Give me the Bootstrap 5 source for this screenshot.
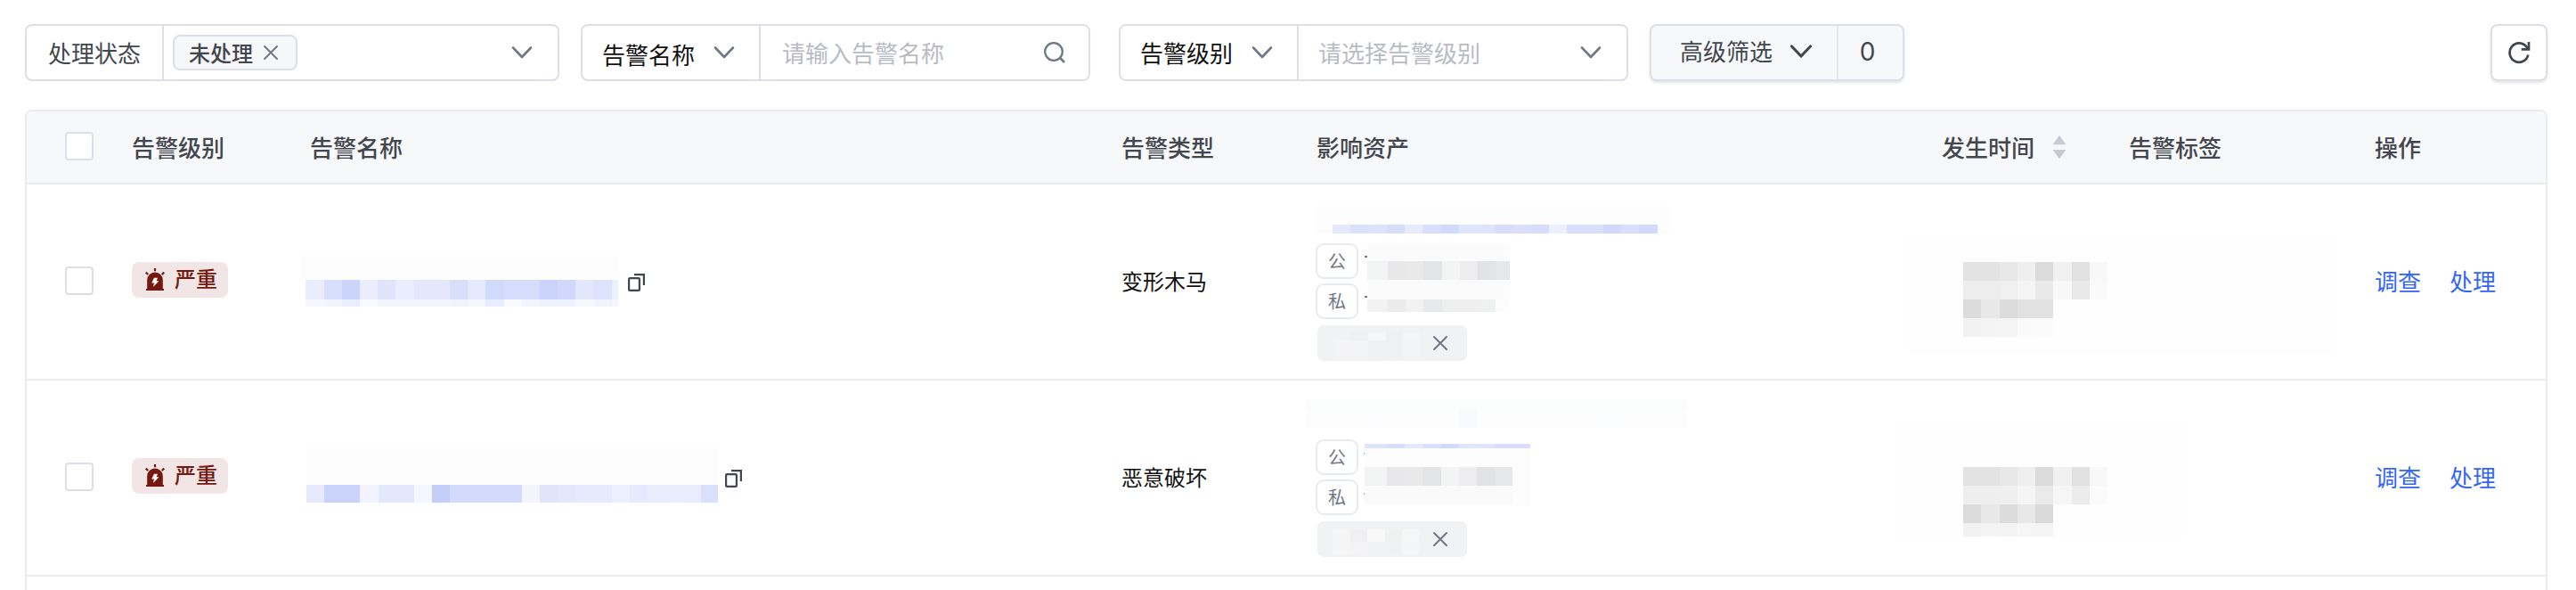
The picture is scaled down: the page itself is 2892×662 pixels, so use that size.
<!DOCTYPE html>
<html lang="zh-CN">
<head>
    <meta charset="UTF-8">
    <meta name="viewport" content="width=device-width, initial-scale=1.0">
    <title>告警列表</title>

    <!-- Bootstrap CSS -->
    <link href="https://cdn.jsdelivr.net/npm/bootstrap@5.3.0/dist/css/bootstrap.min.css" rel="stylesheet">

    <style>
        body {
            font-family: "Noto Sans CJK SC", sans-serif;
            font-size: 26px;
            line-height: 40px;
            color: #42464e;
            background: #fff;
            padding: 27px 32px 0 28px;
            overflow: hidden;
        }
        svg {
            display: block;
            flex: none;
            fill: none;
            stroke: currentColor;
        }

        /* Filter bar */
        .filter-bar {
            height: 64px;
            margin-bottom: 32px;
        }
        .filter-box {
            height: 64px;
            border: 2px solid #dcdfe7;
            border-radius: 8px;
        }
        .filter-label {
            padding-left: 24px;
            border-right: 2px solid #dcdfe7;
        }
        .filter-value {
            padding-left: 24px;
            padding-right: 28px;
        }
        .w-status { width: 600px; margin-right: 24px; }
        .w-name { width: 572px; margin-right: 32px; }
        .w-level { width: 572px; margin-right: 24px; }
        .w-more { width: 286px; }
        .w-status .filter-label { width: 154px; }
        .w-status .filter-value { padding-left: 10px; }
        .w-name .filter-label { width: 200px; padding-left: 22px; }
        .w-name .filter-label span { padding-top: 3px; }
        .w-name .filter-value { padding-right: 25px; }
        .w-level .filter-label { width: 200px; padding-left: 22px; }
        .w-level .filter-value { padding-left: 22px; }
        .filter-label svg { margin-right: 27px; }
        .filter-label, .filter-value { color: #42464e; }
        .field-name { color: #111; }
        .hint { color: #b8bbc3; }
        .icon-gray { color: #717785; }
        .picked-tag {
            width: 140px;
            height: 40px;
            padding-left: 16px;
            border: 2px solid #dcdfe7;
            border-radius: 8px;
            background: #f6f7f9;
            font-size: 24px;
            font-weight: 500;
        }
        .picked-tag svg { margin-left: 11px; }
        .btn-shade {
            box-shadow: 0 2px 3px rgba(30, 35, 60, .12);
        }
        .w-more { background: #f7f8fa; }
        .more-label {
            width: 210px;
            padding-left: 32px;
            border-right: 2px solid #e7e9ef;
        }
        .more-label span { padding-bottom: 4px; }
        .more-label svg { margin: 0 0 3px 19px; }
        .more-count {
            font: 400 28px/40px Inter, sans-serif;
            padding: 0 7px 2px 0;
        }
        .w-reload { width: 64px; }

        /* Alert table */
        .table-frame {
            border: 2px solid #e9ebef;
            border-radius: 8px 8px 0 0;
            height: 560px;
            overflow: hidden;
        }
        .alert-table {
            --bs-table-bg: transparent;
            --bs-table-color: #42464e;
            table-layout: fixed;
            border-collapse: separate;
            border-spacing: 0;
        }
        .alert-table > * > tr > * {
            padding: 0;
            border-bottom: 2px solid #e9edf1;
            color: #42464e;
        }
        .alert-table > thead > tr > th {
            height: 82px;
            background: #f7f8fa;
            font-weight: 500;
            vertical-align: middle;
        }
        .alert-table > tbody > tr > td {
            height: 220px;
            vertical-align: middle;
        }
        .alert-table > tbody > tr > td.cell-top { vertical-align: top; }
        .alert-table > tbody > tr > td.kind {
            font-size: 24px;
            color: #111;
            padding-bottom: 3px;
        }
        .check {
            width: 32px;
            height: 32px;
            margin: 0 0 2px 43px;
            border: 2px solid #dcdfe7;
            border-radius: 4px;
            background: #fff;
        }
        .level-tag {
            width: 108px;
            height: 40px;
            margin-bottom: 4px;
            padding-left: 14px;
            border-radius: 8px;
            background: #f1e6e5;
            color: #75190f;
            font-size: 24px;
            font-weight: 500;
        }
        .level-tag span { margin-left: 10px; padding-bottom: 4px; }
        .copy-icon { margin-top: 99px; }
        .ip-tag {
            width: 48px;
            height: 40px;
            margin: 0 1px 5px -1px;
            border: 2px solid #e7eaef;
            border-radius: 9px;
            font-size: 20px;
            color: #717785;
        }
        .asset-tag {
            width: 168px;
            height: 40px;
            margin: 2px 0 0 1px;
            border-radius: 7px;
            background: #f1f2f4;
            padding-right: 21px;
            color: #717785;
        }
        .asset-tag .mosaic { margin-left: 17px; }
        .ops { gap: 32px; padding-bottom: 3px; }
        .ops a { color: #3366f6; }
        .mosaic { stroke: none; }
        .m-name-1 { margin: 79px 10px 0 -10px; }
        .m-name-2 { margin: 75px 7px 0 -4px; }
        .m-host-1 { margin: 23px 0 11px 0; }
        .m-host-2 { margin: 21px 0 13px -12px; }
        .m-ip-1 { margin: 1px 0 0 6px; }
        .m-ip-2 { margin: 5px 0 0 5px; }
        .m-time-1 { margin: 56px 0 0 -38px; }
        .m-time-2 { margin: 50px 0 0 -53px; }
    </style>
</head>
<body>

<!-- Shared icons -->
<svg width="0" height="0" class="position-absolute">
    <symbol id="i-down" viewBox="0 0 24 16"><path d="M2 2.5 12 13 22 2.5" stroke-width="2.6" stroke-linecap="round" stroke-linejoin="round"/></symbol>
    <symbol id="i-down-bold" viewBox="0 0 26 18"><path d="M2.5 3 13 14 23.5 3" stroke-width="3.2" stroke-linecap="round" stroke-linejoin="round"/></symbol>
    <symbol id="i-close" viewBox="0 0 18 18"><path d="M2 2 16 16M16 2 2 16" stroke-width="2" stroke-linecap="round"/></symbol>
    <symbol id="i-search" viewBox="0 0 26 26"><circle cx="12" cy="12" r="9.8" stroke-width="2.3"/><path d="M19 19 24 24" stroke-width="2.5"/></symbol>
    <symbol id="i-reload" viewBox="0 0 26 26"><path d="M23.3 15.5A10.5 10.8 0 1 1 21.3 6.4L23.6 9.2" stroke-width="2.7"/><path d="M24 1V9.3H15.8" stroke-width="2.7"/></symbol>
    <symbol id="i-copy" viewBox="0 0 20 22"><rect x="2.1" y="6.1" width="11.8" height="13.8" rx="1" stroke-width="2.2"/><path d="M8 2.1H18.9V14" stroke-width="2.2"/></symbol>
    <symbol id="i-alarm" viewBox="0 0 24 28">
        <path d="M12 1V4.2M1.8 5.6 4.2 8M22.2 5.6 19.8 8" stroke-width="2.2"/>
        <path d="M3.2 24V14.2A8.8 8.6 0 0 1 20.8 14.2V24H22V26H2V24Z" fill="currentColor" stroke="none"/>
        <path d="M11 11.8H15L13.6 15.3H16.4L10 22 11 17.6H8.2Z" fill="#fff" stroke="none"/>
    </symbol>
    <symbol id="i-sort" viewBox="0 0 16 28"><path d="M8 1 15.4 11.2H.6ZM8 27.2.6 17H15.4Z" fill="#c7cad3" stroke="none"/></symbol>
</svg>

<!-- Filter bar -->
<div class="filter-bar d-flex">
    <div class="filter-box w-status d-flex">
        <div class="filter-label d-flex align-items-center">处理状态</div>
        <div class="filter-value flex-grow-1 d-flex align-items-center justify-content-between">
            <div class="picked-tag d-flex align-items-center"><span>未处理</span><svg class="icon-gray" width="18" height="18"><use href="#i-close"/></svg></div>
            <svg class="icon-gray" width="24" height="16"><use href="#i-down"/></svg>
        </div>
    </div>
    <div class="filter-box w-name d-flex">
        <div class="filter-label d-flex align-items-center justify-content-between"><span class="field-name">告警名称</span><svg class="icon-gray" width="24" height="16"><use href="#i-down"/></svg></div>
        <div class="filter-value flex-grow-1 d-flex align-items-center justify-content-between">
            <span class="hint">请输入告警名称</span>
            <svg class="icon-gray" width="26" height="26"><use href="#i-search"/></svg>
        </div>
    </div>
    <div class="filter-box w-level d-flex">
        <div class="filter-label d-flex align-items-center justify-content-between"><span class="field-name">告警级别</span><svg class="icon-gray" width="24" height="16"><use href="#i-down"/></svg></div>
        <div class="filter-value flex-grow-1 d-flex align-items-center justify-content-between">
            <span class="hint">请选择告警级别</span>
            <svg class="icon-gray" width="24" height="16"><use href="#i-down"/></svg>
        </div>
    </div>
    <div class="filter-box btn-shade w-more d-flex">
        <div class="more-label d-flex align-items-center"><span>高级筛选</span><svg width="26" height="18"><use href="#i-down-bold"/></svg></div>
        <div class="more-count flex-grow-1 d-flex align-items-center justify-content-center">0</div>
    </div>
    <div class="filter-box btn-shade w-reload ms-auto d-flex align-items-center justify-content-center">
        <svg width="26" height="26"><use href="#i-reload"/></svg>
    </div>
</div>

<!-- Alert table -->
<div class="table-frame">
    <table class="table alert-table mb-0">
        <colgroup>
            <col width="118"><col width="200"><col width="911"><col width="219"><col width="702"><col width="210"><col width="276"><col>
        </colgroup>
        <thead>
            <tr>
                <th><div class="check"></div></th>
                <th>告警级别</th>
                <th>告警名称</th>
                <th>告警类型</th>
                <th>影响资产</th>
                <th><div class="d-flex align-items-center">发生时间<svg class="ms-3 ps-1" width="22" height="28"><use href="#i-sort" width="16" height="28"/></svg></div></th>
                <th>告警标签</th>
                <th>操作</th>
            </tr>
        </thead>
        <tbody>
            <tr>
                <td><div class="check"></div></td>
                <td><div class="level-tag d-flex align-items-center"><svg width="24" height="28"><use href="#i-alarm"/></svg><span>严重</span></div></td>
                <td class="cell-top"><div class="d-flex align-items-start">
                    <svg class="mosaic m-name-1" width="356" height="58" data-mosaic="name1"></svg>
                    <svg class="copy-icon" width="20" height="22"><use href="#i-copy"/></svg>
                </div></td>
                <td class="kind">变形木马</td>
                <td class="cell-top">
                    <svg class="mosaic m-host-1" width="397" height="32" data-mosaic="host1"></svg>
                    <div class="d-flex align-items-start">
                        <div>
                            <div class="ip-tag d-flex align-items-center justify-content-center">公</div>
                            <div class="ip-tag d-flex align-items-center justify-content-center">私</div>
                        </div>
                        <svg class="mosaic m-ip-1" width="163" height="76" data-mosaic="ip1"></svg>
                    </div>
                    <div class="asset-tag d-flex align-items-center justify-content-between">
                        <svg class="mosaic" width="98" height="34" data-mosaic="tag1"></svg>
                        <svg width="18" height="18"><use href="#i-close"/></svg>
                    </div>
                </td>
                <td class="cell-top"><svg class="mosaic m-time-1" width="479" height="135" data-mosaic="time1"></svg></td>
                <td></td>
                <td><div class="ops d-flex"><a class="text-decoration-none" href="#">调查</a><a class="text-decoration-none" href="#">处理</a></div></td>
            </tr>
            <tr>
                <td><div class="check"></div></td>
                <td><div class="level-tag d-flex align-items-center"><svg width="24" height="28"><use href="#i-alarm"/></svg><span>严重</span></div></td>
                <td class="cell-top"><div class="d-flex align-items-start">
                    <svg class="mosaic m-name-2" width="462" height="62" data-mosaic="name2"></svg>
                    <svg class="copy-icon" width="20" height="22"><use href="#i-copy"/></svg>
                </div></td>
                <td class="kind">恶意破坏</td>
                <td class="cell-top">
                    <svg class="mosaic m-host-2" width="428" height="32" data-mosaic="host2"></svg>
                    <div class="d-flex align-items-start">
                        <div>
                            <div class="ip-tag d-flex align-items-center justify-content-center">公</div>
                            <div class="ip-tag d-flex align-items-center justify-content-center">私</div>
                        </div>
                        <svg class="mosaic m-ip-2" width="187" height="70" data-mosaic="ip2"></svg>
                    </div>
                    <div class="asset-tag d-flex align-items-center justify-content-between">
                        <svg class="mosaic" width="98" height="34" data-mosaic="tag2"></svg>
                        <svg width="18" height="18"><use href="#i-close"/></svg>
                    </div>
                </td>
                <td class="cell-top"><svg class="mosaic m-time-2" width="328" height="125" data-mosaic="time2"></svg></td>
                <td></td>
                <td><div class="ops d-flex"><a class="text-decoration-none" href="#">调查</a><a class="text-decoration-none" href="#">处理</a></div></td>
            </tr>
        </tbody>
    </table>
</div>

<script>
    // Masked values: each strip is [x, y, cell width, cell height, colours]
    const mosaics = {
        name1: [
            [0, 0, 356, 28, "fdfdfe"],
            [5.4, 28, 20.2, 22, "e9edfd d8dffc cbd5fb e9edfd dfe4fb eaedfd e5e8fc e5e8fc d9defb e5e9fd d0dafb d5ddfc d5ddfc cad3fb d0d8fb e2e7fc dde2fd edf0fe"],
            [5.4, 50, 20.2, 8, "f6f7fe f1f3fe ebeefe f8f9fe f3f5fe f3f5fe f3f5fe f3f5fe f0f2fe f4f6fe e7ecfe f9fafe f3f5fe eef1fe eef1fe f7f8fe f1f3fe f6f7fe"]
        ],
        name2: [
            [0, 0, 462, 42, "fdfdfe"],
            [0, 42, 20.15, 20, "e6e9fc cad4fa cad4fa f2f3fe e4e8fc e4e8fc f5f7fe c4cefa d3dafb d3dafb d3dafb d3dafb f4f4fe e0e5fc e4e8fc e6eafc e6eafc eceffd e6eafd e9ecfd eaedfd e9ecfd dadffb"]
        ],
        host1: [
            [0, 0, 397, 32, "fdfdfd"],
            [18, 21.5, 20.25, 10.5, "e6e9fd dae1fc dfe4fd d6defc e8ebfd d9dffc d0dafb e0e6fd e0e5fd dadcfb dcdefc d8dcfb edeffd d9dffd dadffc d0d9fb d9dffc d2dafb"]
        ],
        host2: [
            [0, 0, 428, 13, "fbfdfc"],
            [0, 13, 428, 19, "fdfdfd"],
            [70, 13, 20, 19, "fcfcfe"],
            [172, 13, 20, 19, "f9faff"],
            [333, 13, 20, 19, "fbfcfe"]
        ],
        ip1: [
            [0, 13, 3, 2, "717785"],
            [0, 58, 3, 2, "717785"],
            [3, 0, 160, 76, "fbfbfb"],
            [3, 19, 23, 21, "f2f3f3"],
            [26, 19, 20.2, 21, "e8e8ea e9e9ea e3e4e6 f3f5f5 ededef e2e3e5 e6e7e8"],
            [3, 62, 23, 14, "f2f2f2"],
            [26, 62, 20.2, 14, "eaebea f2f2f2 e7e9eb eeefef eeefee eff0f0 fdfdfd"]
        ],
        ip2: [
            [0, 10, 1, 2, "a9adb6"],
            [0, 55, 1, 2, "a9adb6"],
            [1, 0, 186, 70, "fdfdfd"],
            [1, 0, 25, 5, "dfe4fd"],
            [26, 0, 20.2, 5, "d6defc e6e9fd d9dffc d0dafb e0e6fd e0e5fd d9dcfb d9dcfb"],
            [1, 26, 25, 21, "f2f3f3"],
            [26, 26, 20.2, 21, "e8e8ea e9e9ea e3e4e6 f3f5f5 ededef e2e3e5 e6e7e8"],
            [1, 47, 166, 21, "fafafa"]
        ],
        tag1: [
            [2, 5, 19.2, 9, "f2f2f3 eff0f2 f7f7f7 eff0f0 f5f5f6"],
            [2, 14, 19.2, 20, "f4f4f6 f3f4f5 f0f1f3 eff0f2 f3f4f6"]
        ],
        tag2: [
            [0, 6, 19.6, 14, "f5f5f6 f0f0f2 f8f8f8 f0f1f1 f6f6f7"],
            [0, 20, 19.6, 14, "f5f5f6 f3f3f5 f1f2f3 f0f1f2 f5f5f7"]
        ],
        time1: [
            [0, 0, 479, 135, "fefefe"],
            [62, 30.5, 20.25, 21, "e3e3e3 e3e3e3 e8e8e8 efefef dbdbdb f1f1f1 e1e1e1 f8f8f8"],
            [62, 51.5, 20.25, 21, "ededed ededed f0f0f0 f5f5f5 e9e9e9 f8f8f8 e9e9e9 fafafa"],
            [62, 72.5, 20.25, 21, "dcdcdc e8e8e8 dcdcdc e1e1e1 e1e1e1"],
            [62, 93.5, 20.25, 21, "f2f2f2 f4f4f4 f5f5f5 fafafa fbfbfb"]
        ],
        time2: [
            [0, 0, 328, 125, "fefefe"],
            [77, 47, 20.25, 21, "e3e3e3 e3e3e3 e8e8e8 efefef dbdbdb f1f1f1 e1e1e1 f8f8f8"],
            [77, 68, 20.25, 21, "eeeeee eeeeee efefef f5f5f5 eaeaea f6f6f6 ececec fbfbfb"],
            [77, 89, 20.25, 21, "dcdcdc e8e8e8 dcdcdc e8e8e8 dadada"],
            [77, 110, 20.25, 15, "f2f2f2 f4f4f4 f3f3f3 f6f6f6 f5f5f5"]
        ]
    };

    document.querySelectorAll("[data-mosaic]").forEach(svg => {
        mosaics[svg.dataset.mosaic].forEach(([x, y, w, h, colours]) => {
            colours.split(" ").forEach((colour, i) => {
                let rect = document.createElementNS("http://www.w3.org/2000/svg", "rect");
                rect.setAttribute("x", x + i * w);
                rect.setAttribute("y", y);
                rect.setAttribute("width", w);
                rect.setAttribute("height", h);
                rect.setAttribute("fill", "#" + colour);
                rect.setAttribute("shape-rendering", "crispEdges");
                svg.appendChild(rect);
            });
        });
    });
</script>

<!-- Bootstrap JS -->
<script src="https://cdn.jsdelivr.net/npm/bootstrap@5.3.0/dist/js/bootstrap.bundle.min.js"></script>

</body>
</html>
